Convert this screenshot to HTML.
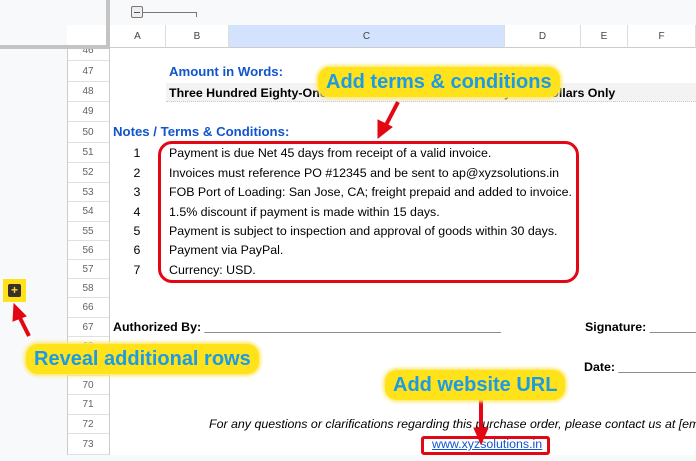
<!DOCTYPE html>
<html><head><meta charset="utf-8"><style>
*{margin:0;padding:0;box-sizing:border-box}
body{width:696px;height:461px;overflow:hidden;background:#fff;font-family:"Liberation Sans",Arial,sans-serif;position:relative}
#w{position:absolute;left:0;top:0;width:696px;height:461px;overflow:hidden}
.a{position:absolute}
.rn{position:absolute;left:67px;width:42px;text-align:center;font-size:10px;color:#5f6368;border-bottom:1px solid #e0e0e0;background:#fff}
.t{position:absolute;font-size:12.4px;color:#000;white-space:nowrap}
.n{position:absolute;left:125px;width:24px;text-align:center;font-size:12.4px}
.lab{position:absolute;background:#ffe21a;border-radius:12px;color:#1a9be8;font-weight:bold;font-size:20px;white-space:nowrap;padding:3px 8px;line-height:24px;box-shadow:0 0 3px 2px #ffe96a}
.ch{position:absolute;top:25px;height:23px;line-height:23px;text-align:center;font-size:10px;color:#444;border-right:1px solid #ddd;border-bottom:1px solid #ccc;background:#fff}
</style></head><body><div id="w">
<div class="a" style="left:0;top:0;width:696px;height:25px;background:#f8f9fa"></div>
<div class="a" style="left:0;top:0;width:67px;height:461px;background:#f8f9fa"></div>
<div class="a" style="left:0;top:455px;width:696px;height:6px;background:#f8f9fa"></div>
<div class="a" style="left:131px;top:6px;width:12px;height:12px;border:1px solid #777;border-radius:2px;background:#eee"></div>
<div class="a" style="left:134px;top:12px;width:6px;height:1px;background:#555"></div>
<div class="a" style="left:143px;top:12px;width:54px;height:1px;background:#777"></div>
<div class="a" style="left:196px;top:12px;width:1px;height:5px;background:#777"></div>
<div class="ch" style="left:67px;width:43px"></div>
<div class="ch" style="left:110px;width:56px">A</div>
<div class="ch" style="left:166px;width:63px">B</div>
<div class="ch" style="left:229px;width:276px;background:#d3e3fd">C</div>
<div class="ch" style="left:505px;width:76px">D</div>
<div class="ch" style="left:581px;width:47px">E</div>
<div class="ch" style="left:628px;width:68px">F</div>
<div class="rn" style="top:48px;height:13px;line-height:6px">46</div>
<div class="rn" style="top:61px;height:21px;line-height:21px">47</div>
<div class="rn" style="top:82px;height:20px;line-height:20px">48</div>
<div class="rn" style="top:102px;height:20px;line-height:20px">49</div>
<div class="rn" style="top:122px;height:21px;line-height:21px">50</div>
<div class="rn" style="top:143px;height:20px;line-height:20px">51</div>
<div class="rn" style="top:163px;height:20px;line-height:20px">52</div>
<div class="rn" style="top:183px;height:19px;line-height:19px">53</div>
<div class="rn" style="top:202px;height:20px;line-height:20px">54</div>
<div class="rn" style="top:222px;height:19px;line-height:19px">55</div>
<div class="rn" style="top:241px;height:19px;line-height:19px">56</div>
<div class="rn" style="top:260px;height:19px;line-height:19px">57</div>
<div class="rn" style="top:279px;height:19px;line-height:19px">58</div>
<div class="rn" style="top:298px;height:20px;line-height:20px">66</div>
<div class="rn" style="top:318px;height:19px;line-height:19px">67</div>
<div class="rn" style="top:337px;height:20px;line-height:20px">68</div>
<div class="rn" style="top:357px;height:19px;line-height:19px">69</div>
<div class="rn" style="top:376px;height:19px;line-height:19px">70</div>
<div class="rn" style="top:395px;height:20px;line-height:20px">71</div>
<div class="rn" style="top:415px;height:19px;line-height:19px">72</div>
<div class="rn" style="top:434px;height:21px;line-height:21px">73</div>
<div class="a" style="left:67px;top:48px;width:1px;height:407px;background:#ccc"></div>
<div class="a" style="left:109px;top:48px;width:1px;height:407px;background:#ccc"></div>
<div class="a" style="left:106px;top:0;width:4px;height:48px;background:#c4c4c4"></div>
<div class="a" style="left:0;top:45px;width:110px;height:4px;background:#c4c4c4"></div>
<div class="t" style="left:169px;top:64px;font-weight:bold;color:#1155cc;font-size:13.2px">Amount in Words:</div>
<div class="a" style="left:166px;top:83px;width:530px;height:19px;background:#f3f3f3;border-bottom:1px dotted #ccc"></div>
<div class="t" style="left:169px;top:86px;font-weight:bold">Three Hundred Eighty-One Thousand Six Hundred Twenty-Two Dollars Only</div>
<div class="t" style="left:113px;top:124px;font-weight:bold;color:#1155cc;font-size:13.2px">Notes / Terms &amp; Conditions:</div>
<div class="n" style="top:146px">1</div><div class="t" style="left:169px;top:146px">Payment is due Net 45 days from receipt of a valid invoice.</div>
<div class="n" style="top:166px">2</div><div class="t" style="left:169px;top:166px">Invoices must reference PO #12345 and be sent to ap@xyzsolutions.in</div>
<div class="n" style="top:185px">3</div><div class="t" style="left:169px;top:185px">FOB Port of Loading: San Jose, CA; freight prepaid and added to invoice.</div>
<div class="n" style="top:205px">4</div><div class="t" style="left:169px;top:205px">1.5% discount if payment is made within 15 days.</div>
<div class="n" style="top:224px">5</div><div class="t" style="left:169px;top:224px">Payment is subject to inspection and approval of goods within 30 days.</div>
<div class="n" style="top:243px">6</div><div class="t" style="left:169px;top:243px">Payment via PayPal.</div>
<div class="n" style="top:263px">7</div><div class="t" style="left:169px;top:263px">Currency: USD.</div>
<div class="a" style="left:158px;top:141px;width:421px;height:142px;border:3px solid #e30613;border-radius:14px"></div>
<div class="t" style="left:113px;top:320px;font-weight:bold">Authorized By: ___________________________________________</div>
<div class="t" style="left:585px;top:320px;font-weight:bold;width:111px;overflow:hidden">Signature: ____________</div>
<div class="t" style="left:584px;top:360px;font-weight:bold;width:112px;overflow:hidden">Date: ______________</div>
<div class="t" style="left:209px;top:417px;font-style:italic;width:487px;overflow:hidden">For any questions or clarifications regarding this purchase order, please contact us at [email]</div>
<div class="t" style="left:432px;top:437px;color:#1155cc;text-decoration:underline">www.xyzsolutions.in</div>
<div class="a" style="left:421px;top:436px;width:129px;height:19px;border:3px solid #e30613;border-radius:3px"></div>
<div class="a" style="left:3px;top:279px;width:23px;height:23px;background:#ffe21a"></div>
<div class="a" style="left:8px;top:284px;width:13px;height:13px;background:#3a3226;border-radius:2px;color:#ffd24a;font-size:12px;line-height:13px;text-align:center;font-weight:bold">+</div>
<svg class="a" style="left:0;top:0" width="696" height="461">
<g stroke="#e30613" stroke-width="4" fill="#e30613">
<line x1="398" y1="102" x2="386" y2="125"/>
<polygon points="378,138 378,120 392,127" stroke-width="1"/>
<line x1="29" y1="336" x2="19" y2="316"/>
<polygon points="14,304 26,316 13,321" stroke-width="1"/>
<line x1="481" y1="400" x2="481" y2="430"/>
<polygon points="481,444 474,428 488,428" stroke-width="1"/>
</g></svg>
<div class="lab" style="left:318px;top:67px">Add terms &amp; conditions</div>
<div class="lab" style="left:26px;top:344px">Reveal additional rows</div>
<div class="lab" style="left:385px;top:370px">Add website URL</div>
</div></body></html>
